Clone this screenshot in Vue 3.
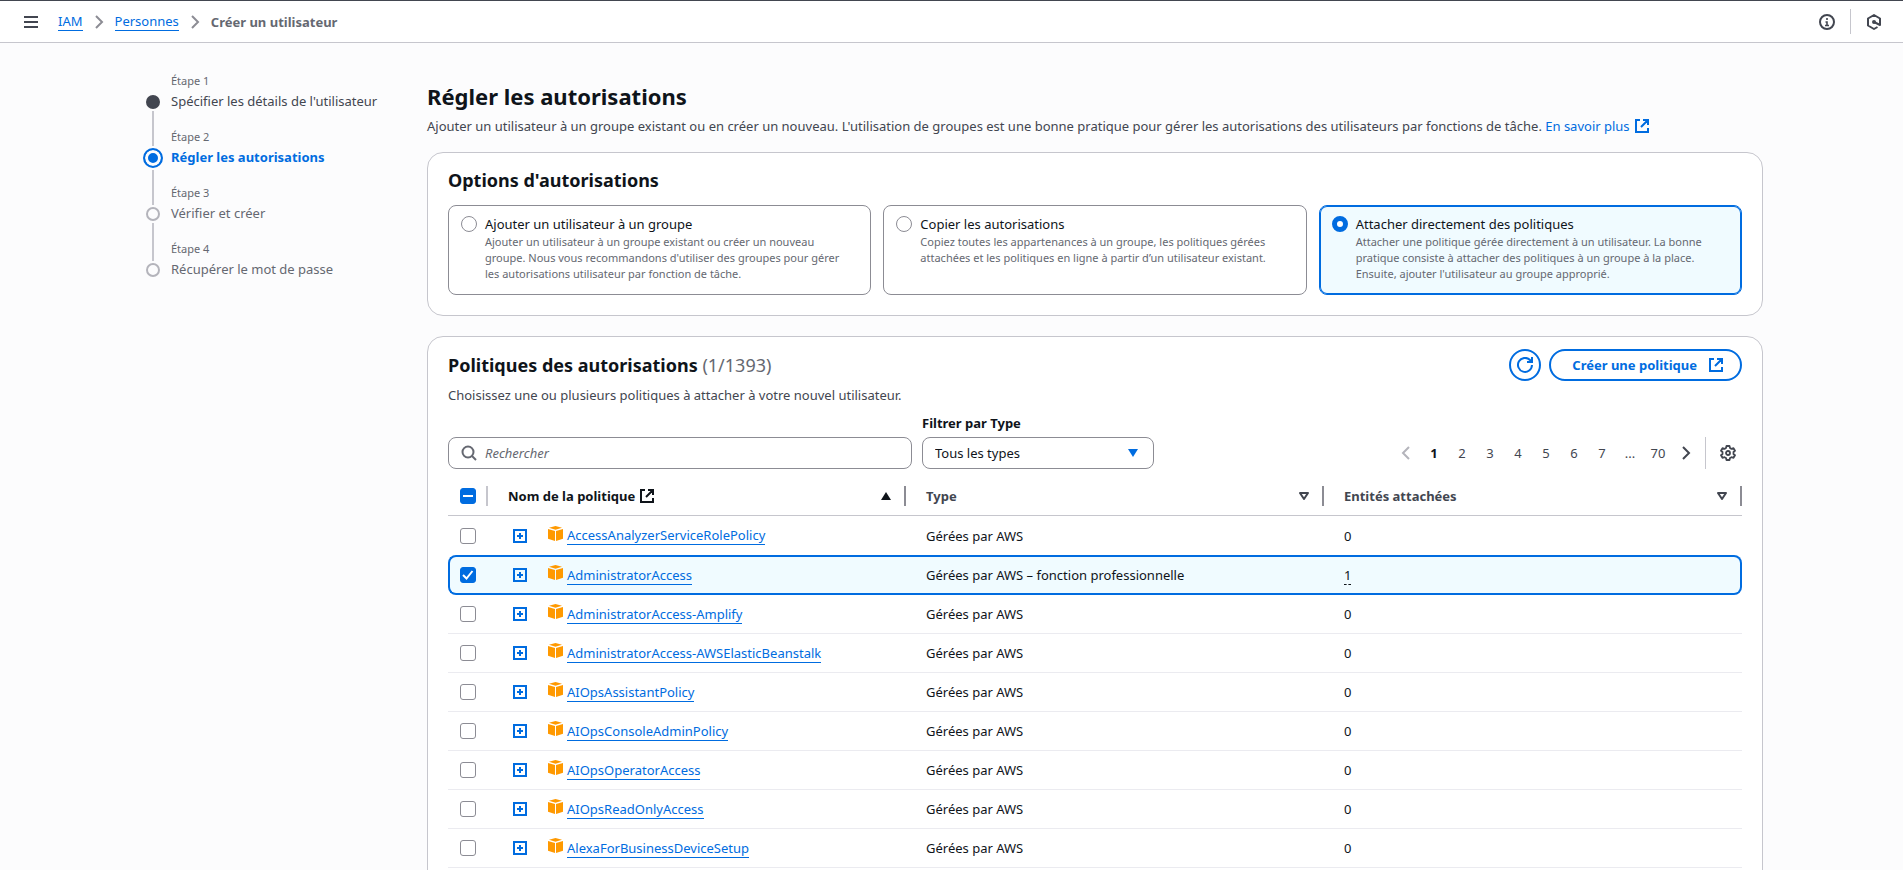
<script setup>
import { ref, computed } from 'vue'

const steps = [
  { label: 'Étape 1', title: "Spécifier les détails de l'utilisateur", state: 'done' },
  { label: 'Étape 2', title: 'Régler les autorisations', state: 'active' },
  { label: 'Étape 3', title: 'Vérifier et créer', state: 'todo' },
  { label: 'Étape 4', title: 'Récupérer le mot de passe', state: 'todo' },
]

const options = [
  {
    id: 'group',
    title: 'Ajouter un utilisateur à un groupe',
    text: "Ajouter un utilisateur à un groupe existant ou créer un nouveau\ngroupe. Nous vous recommandons d'utiliser des groupes pour gérer\nles autorisations utilisateur par fonction de tâche.",
  },
  {
    id: 'copy',
    title: 'Copier les autorisations',
    text: 'Copiez toutes les appartenances à un groupe, les politiques gérées\nattachées et les politiques en ligne à partir d’un utilisateur existant.',
  },
  {
    id: 'attach',
    title: 'Attacher directement des politiques',
    text: "Attacher une politique gérée directement à un utilisateur. La bonne\npratique consiste à attacher des politiques à un groupe à la place.\nEnsuite, ajouter l'utilisateur au groupe approprié.",
  },
]
const option = ref('attach')

const policies = ref([
  { name: 'AccessAnalyzerServiceRolePolicy', type: 'Gérées par AWS', attached: 0, checked: false },
  { name: 'AdministratorAccess', type: 'Gérées par AWS – fonction professionnelle', attached: 1, checked: true },
  { name: 'AdministratorAccess-Amplify', type: 'Gérées par AWS', attached: 0, checked: false },
  { name: 'AdministratorAccess-AWSElasticBeanstalk', type: 'Gérées par AWS', attached: 0, checked: false },
  { name: 'AIOpsAssistantPolicy', type: 'Gérées par AWS', attached: 0, checked: false },
  { name: 'AIOpsConsoleAdminPolicy', type: 'Gérées par AWS', attached: 0, checked: false },
  { name: 'AIOpsOperatorAccess', type: 'Gérées par AWS', attached: 0, checked: false },
  { name: 'AIOpsReadOnlyAccess', type: 'Gérées par AWS', attached: 0, checked: false },
  { name: 'AlexaForBusinessDeviceSetup', type: 'Gérées par AWS', attached: 0, checked: false },
])
const selectedCount = computed(() => policies.value.filter((p) => p.checked).length)
const allChecked = computed(() => selectedCount.value === policies.value.length)
const someChecked = computed(() => selectedCount.value > 0 && !allChecked.value)
function toggleAll(event) {
  policies.value.forEach((p) => (p.checked = event.target.checked))
}

const pages = ['1', '2', '3', '4', '5', '6', '7', '…', '70']
const page = ref('1')
const search = ref('')
</script>

<template>
  <div class="app">
    <header class="topbar">
      <button class="icon-btn menu" type="button" aria-label="Menu">
        <svg width="14" height="12" viewBox="0 0 14 12"><path d="M0 1h14M0 6h14M0 11h14" stroke="currentColor" stroke-width="2" /></svg>
      </button>
      <nav class="crumbs" aria-label="Fil d'Ariane">
        <a class="link" href="#">IAM</a>
        <svg class="chev" width="10" height="14" viewBox="0 0 10 14"><path d="M2 1l6 6-6 6" /></svg>
        <a class="link" href="#">Personnes</a>
        <svg class="chev" width="10" height="14" viewBox="0 0 10 14"><path d="M2 1l6 6-6 6" /></svg>
        <span class="current">Créer un utilisateur</span>
      </nav>
      <div class="tools">
        <button class="icon-btn" type="button" aria-label="Informations">
          <svg width="16" height="16" viewBox="0 0 16 16" fill="none" stroke="currentColor" stroke-width="2"><circle cx="8" cy="8" r="7" /><path d="M8 4v2M6.500 8H8v3M6 11.500h4" stroke-width="1.600" /></svg>
        </button>
        <span class="tool-sep"></span>
        <button class="icon-btn" type="button" aria-label="Assistant">
          <svg width="16" height="16" viewBox="0 0 16 16" fill="none" stroke="currentColor" stroke-width="2"><path d="M11.500 13L8 15l-6-3.500v-7L8 1l6 3.500V11L8 8" stroke-linejoin="round" /><circle cx="8" cy="8" r="1" fill="currentColor" /></svg>
        </button>
      </div>
    </header>

    <div class="layout">
      <nav class="steps" aria-label="Étapes">
        <ol>
          <li v-for="s in steps" :key="s.label" :class="s.state">
            <span class="marker"><span class="seg before"></span><span class="dot-box"><span class="dot"></span></span><span class="seg after"></span></span>
            <span class="step-text"><span class="step-label">{{ s.label }}</span><span class="step-title">{{ s.title }}</span></span>
          </li>
        </ol>
      </nav>

      <main>
        <h1>Régler les autorisations</h1>
        <p class="lead">
          Ajouter un utilisateur à un groupe existant ou en créer un nouveau. L'utilisation de groupes est une bonne pratique pour gérer les autorisations des utilisateurs par fonctions de tâche.
          <a class="more" href="#">En savoir plus <svg class="ext" width="14" height="14" viewBox="0 0 14 14"><path d="M5 1H1v12h12V9M8 1h5v5M13 1L6 8" /></svg></a>
        </p>

        <section class="card options">
          <h2>Options d'autorisations</h2>
          <div class="tiles">
            <label v-for="o in options" :key="o.id" class="tile" :class="{ on: option === o.id }">
              <input v-model="option" type="radio" name="option" :value="o.id" />
              <span class="tile-body"><span class="tile-title">{{ o.title }}</span><span class="tile-text">{{ o.text }}</span></span>
            </label>
          </div>
        </section>

        <section class="card policies">
          <div class="card-head">
            <h2>Politiques des autorisations <span class="count">({{ selectedCount }}/1393)</span></h2>
            <div class="actions">
              <button class="btn round" type="button" aria-label="Actualiser">
                <svg width="16" height="16" viewBox="0 0 16 16"><path d="M15 8a7 7 0 1 1-2-5l2 2M15 0v5h-5" /></svg>
              </button>
              <button class="btn" type="button">
                Créer une politique
                <svg width="14" height="14" viewBox="0 0 14 14"><path d="M5 1H1v12h12V9M8 1h5v5M13 1L6 8" /></svg>
              </button>
            </div>
          </div>
          <p class="hint">Choisissez une ou plusieurs politiques à attacher à votre nouvel utilisateur.</p>

          <div class="filters">
            <div class="search">
              <svg width="16" height="16" viewBox="0 0 16 16" fill="none" stroke="currentColor" stroke-width="2"><circle cx="7" cy="7" r="5.500" /><path d="M11 11l4 4" /></svg>
              <input v-model="search" type="text" placeholder="Rechercher" aria-label="Rechercher" />
            </div>
            <div class="type">
              <label for="type">Filtrer par Type</label>
              <div class="select">
                <select id="type"><option>Tous les types</option></select>
                <svg width="10" height="8" viewBox="0 0 10 8"><path d="M0 0h10L5 8z" fill="currentColor" /></svg>
              </div>
            </div>
            <div class="pager">
              <button class="page off" type="button" aria-label="Page précédente"><svg width="10" height="14" viewBox="0 0 10 14"><path d="M8 1L2 7l6 6" /></svg></button>
              <template v-for="p in pages" :key="p">
                <span v-if="p === '…'" class="page">...</span>
                <button v-else class="page" :class="{ here: p === page }" type="button" @click="page = p">{{ p }}</button>
              </template>
              <button class="page next" type="button" aria-label="Page suivante"><svg width="10" height="14" viewBox="0 0 10 14"><path d="M2 1l6 6-6 6" /></svg></button>
              <span class="pager-sep"></span>
              <button class="icon-btn" type="button" aria-label="Préférences">
                <svg width="16" height="16" viewBox="0 0 16 16" fill="none" stroke="currentColor" stroke-width="1.800" stroke-linejoin="round"><path d="M6.500 1h3l.5 2 1.500.9 2-.7 1.500 2.600L13.500 7v2l1.500 1.300-1.500 2.500-2-.6-1.500.8-.5 2h-3L6 13l-1.500-.8-2 .6L1 10.300 2.500 9V7L1 5.800l1.500-2.600 2 .7L6 3z" /><circle cx="8" cy="8" r="2" /></svg>
              </button>
            </div>
          </div>

          <table>
            <colgroup><col class="c-check" /><col /><col /><col /></colgroup>
            <thead>
              <tr>
                <th>
                  <div class="head check-head">
                    <span class="check">
                      <input type="checkbox" aria-label="Tout sélectionner" :checked="allChecked" :indeterminate="someChecked" @change="toggleAll" />
                      <svg v-if="someChecked" width="16" height="16" viewBox="0 0 16 16"><path d="M3 8h10" /></svg>
                    </span>
                    <i class="sep light"></i>
                  </div>
                </th>
                <th class="sorted">
                  <div class="head">
                    <span>Nom de la politique</span>
                    <svg class="ext" width="14" height="14" viewBox="0 0 14 14"><path d="M5 1H1v12h12V9M8 1h5v5M13 1L6 8" /></svg>
                    <svg class="sort" width="10" height="8" viewBox="0 0 10 8"><path d="M0 8h10L5 0z" fill="currentColor" /></svg>
                    <i class="sep"></i>
                  </div>
                </th>
                <th v-for="h in ['Type', 'Entités attachées']" :key="h">
                  <div class="head">
                    <span>{{ h }}</span>
                    <svg class="sort" width="10" height="8" viewBox="0 0 10 8"><path d="M1 1h8L5 7z" fill="none" stroke="currentColor" stroke-width="2" stroke-linejoin="round" /></svg>
                    <i class="sep"></i>
                  </div>
                </th>
              </tr>
            </thead>
            <tbody>
              <tr v-for="p in policies" :key="p.name" :class="{ picked: p.checked }">
                <td class="td-check">
                  <span class="check">
                    <input v-model="p.checked" type="checkbox" :aria-label="p.name" />
                    <svg v-if="p.checked" width="16" height="16" viewBox="0 0 16 16"><path d="M3 8l3.500 3.500L12.500 4" /></svg>
                  </span>
                </td>
                <td>
                  <div class="name">
                    <button class="expand" type="button" aria-label="Développer">
                      <svg width="14" height="14" viewBox="0 0 14 14"><path d="M1 1h12v12H1zM7 4v6M4 7h6" /></svg>
                    </button>
                    <svg class="cube" width="15" height="15" viewBox="0 0 15 15" fill="#ff9900"><path d="M7.500 0L14 1.800 7.500 3.800 1 1.800z" /><path d="M0 3l7 2v10l-7-2.200z" /><path d="M15 3L8 5v10l7-2.200z" /></svg>
                    <a class="link" href="#">{{ p.name }}</a>
                  </div>
                </td>
                <td>{{ p.type }}</td>
                <td><span :class="{ dashed: p.attached > 0 }">{{ p.attached }}</span></td>
              </tr>
            </tbody>
          </table>
        </section>
      </main>
    </div>
  </div>
</template>

<style>
body {
  margin: 0;
  background: #fcfcfd;
}
</style>

<style scoped>
.app,
.app * {
  box-sizing: border-box;
}
.app {
  height: 100vh;
  overflow: hidden;
  background: #fcfcfd;
  color: #0f141a;
  font: 13px/20px "Noto Sans", "Open Sans", sans-serif;
}
h1, h2, p, ol { margin: 0; }
ol { padding: 0; list-style: none; }
button, input, select { font: inherit; color: inherit; }
svg { display: block; flex: none; }
.icon-btn {
  display: flex;
  padding: 0;
  border: 0;
  background: none;
  color: #424650;
}
.link {
  display: inline-block;
  line-height: 18px;
  color: #006ce0;
  text-decoration: none;
  border-bottom: 1px solid #006ce0;
}

.topbar {
  display: flex;
  align-items: center;
  height: 43px;
  padding: 0 21px 0 24px;
  background: #fff;
  border-top: 1px solid #424650;
  border-bottom: 1px solid #c6c6cd;
}
.crumbs {
  display: flex;
  align-items: center;
  gap: 11px;
  margin-left: 20px;
}
.chev { fill: none; stroke: #8c8c94; stroke-width: 2; }
.current { font-weight: 700; color: #656871; }
.tools {
  display: flex;
  align-items: center;
  gap: 15px;
  margin-left: auto;
}
.tool-sep { width: 1px; height: 25px; background: #c6c6cd; }

.layout {
  display: grid;
  grid-template-columns: 287px minmax(0, 1fr);
  padding: 0 140px;
}
.steps { padding-top: 29px; }
.steps li { display: flex; height: 56px; }
.marker {
  display: flex;
  flex-direction: column;
  align-items: center;
  width: 26px;
  margin-right: 5px;
}
.seg { width: 2px; background: #c6c6cd; }
.before { height: 21px; }
.after { flex: 1; }
.steps li:first-child .before,
.steps li:last-child .after { background: none; }
.dot-box {
  display: flex;
  align-items: center;
  justify-content: center;
  height: 18px;
}
.dot { width: 14px; height: 14px; border-radius: 50%; border: 2px solid #b4b4bb; }
.done .dot { background: #424650; border-color: #424650; }
.active .before { height: 18px; }
.active .dot-box { height: 24px; }
.active .dot {
  width: 20px;
  height: 20px;
  border-color: #006ce0;
  background: #006ce0;
  box-shadow: inset 0 0 0 3px #fcfcfd;
}
.step-text { display: flex; flex-direction: column; color: #656871; white-space: nowrap; }
.step-label { font-size: 11px; line-height: 18px; }
.step-title { line-height: 22px; }
.done .step-title { color: #424650; }
.active .step-title { color: #006ce0; font-weight: 700; }

main { padding-top: 37px; }
h1 { font-size: 22px; line-height: 32px; }
h2 { font-size: 18px; line-height: 28px; }
.lead { margin-top: 4px; color: #424650; }
.more { color: #006ce0; text-decoration: none; }
.more .ext { display: inline-block; margin-left: 2px; vertical-align: -2px; }
.ext { fill: none; stroke: currentColor; stroke-width: 2; }
.card {
  padding: 0 20px 20px;
  background: #fff;
  border: 1px solid #c6c6cd;
  border-radius: 16px;
}
.options { margin-top: 16px; padding-top: 13px; }
.policies { margin-top: 20px; padding-top: 12px; }

.tiles {
  display: grid;
  grid-template-columns: repeat(3, minmax(0, 1fr));
  gap: 12px;
  margin-top: 11px;
}
.tile {
  display: flex;
  gap: 8px;
  padding: 8px 0 12px 12px;
  border: 1px solid #8c8c94;
  border-radius: 8px;
}
.tile.on { background: #f0fbff; border-color: #006ce0; box-shadow: inset 0 0 0 1px #006ce0; }
.tile input {
  appearance: none;
  flex: none;
  width: 16px;
  height: 16px;
  margin: 2px 0 0;
  border: 1px solid #8c8c94;
  border-radius: 50%;
  background: #fff;
}
.tile input:checked { border: 5px solid #006ce0; }
.tile-body { display: flex; flex-direction: column; }
.tile-text { font-size: 11px; line-height: 16px; color: #656871; white-space: pre-line; }

.card-head { display: flex; justify-content: space-between; align-items: center; }
.count { font-weight: 400; color: #656871; }
.actions { display: flex; gap: 8px; }
.btn {
  display: flex;
  align-items: center;
  gap: 12px;
  height: 32px;
  padding: 0 17px 0 21px;
  border: 2px solid #006ce0;
  border-radius: 16px;
  background: #fff;
  color: #006ce0;
  font-weight: 700;
}
.btn.round { width: 32px; padding: 0; justify-content: center; }
.btn svg { fill: none; stroke: currentColor; stroke-width: 2; }
.hint { margin-top: 4px; color: #424650; }

.filters { display: flex; align-items: flex-end; margin-top: 8px; }
.search {
  display: flex;
  align-items: center;
  gap: 8px;
  flex: 0 1 464px;
  height: 32px;
  padding: 0 12px;
  border: 1px solid #8c8c94;
  border-radius: 8px;
  color: #656871;
}
.search input {
  flex: 1;
  min-width: 0;
  padding: 0;
  border: 0;
  outline: 0;
  background: none;
}
.search input::placeholder { color: #656871; font-style: italic; opacity: 1; }
.type { width: 232px; margin-left: 10px; }
.type label { display: block; margin-bottom: 4px; font-weight: 700; }
.select { display: grid; align-items: center; }
.select > * { grid-area: 1 / 1; }
.select select {
  appearance: none;
  width: 100%;
  height: 32px;
  padding: 0 12px;
  border: 1px solid #8c8c94;
  border-radius: 8px;
  background: #fff;
}
.select svg { justify-self: end; margin-right: 16px; color: #006ce0; pointer-events: none; }
.pager {
  display: flex;
  align-items: center;
  height: 32px;
  margin-left: auto;
  padding-right: 6px;
  color: #424650;
}
.page {
  display: flex;
  justify-content: center;
  align-items: center;
  min-width: 28px;
  padding: 0;
  border: 0;
  background: none;
}
.page svg { fill: none; stroke: currentColor; stroke-width: 2; }
.off { color: #b4b4bb; }
.here { color: #0f141a; font-weight: 700; }
.pager-sep { width: 1px; height: 32px; margin: 0 14px 0 5px; background: #c6c6cd; }

table {
  width: 100%;
  margin-top: 7px;
  border-spacing: 0;
  table-layout: fixed;
}
.c-check { width: 40px; }
th {
  height: 40px;
  padding: 0 0 0 20px;
  border-bottom: 1px solid #c6c6cd;
  color: #424650;
  text-align: left;
}
th:first-child { padding-left: 12px; }
.sorted { color: #0f141a; }
.head { display: flex; align-items: center; gap: 5px; }
.sort { margin-left: auto; }
.sep { width: 2px; height: 20px; margin-left: 8px; background: #8c8c94; }
.sep.light { background: #c6c6cd; margin-left: auto; }
td {
  height: 39px;
  padding: 0 0 0 20px;
  border-bottom: 1px solid #ebebf0;
}
tbody tr:first-child td { border-bottom: 0; }
td:first-child { padding-left: 12px; }
.picked td {
  height: 40px;
  background: #f0fbff;
  border-top: 2px solid #006ce0;
  border-bottom: 2px solid #006ce0;
}
.picked td:first-child { padding-left: 10px; border-left: 2px solid #006ce0; border-radius: 8px 0 0 8px; }
.picked td:last-child { border-right: 2px solid #006ce0; border-radius: 0 8px 8px 0; }
.check { display: grid; width: 16px; height: 16px; }
.check > * { grid-area: 1 / 1; }
.check input {
  appearance: none;
  width: 16px;
  height: 16px;
  margin: 0;
  border: 1px solid #8c8c94;
  border-radius: 3px;
  background: #fff;
}
.check input:checked,
.check input:indeterminate { background: #006ce0; border-color: #006ce0; }
.check svg { fill: none; stroke: #fff; stroke-width: 2; pointer-events: none; }
.name { display: flex; align-items: center; }
.expand {
  display: flex;
  padding: 0;
  margin: 0 21px 0 5px;
  border: 0;
  background: none;
  color: #006ce0;
}
.expand svg { fill: none; stroke: currentColor; stroke-width: 2; }
.cube { margin: 0 4px 5px 0; }
.dashed { display: inline-block; line-height: 18px; border-bottom: 1px dashed #0f141a; }
</style>
